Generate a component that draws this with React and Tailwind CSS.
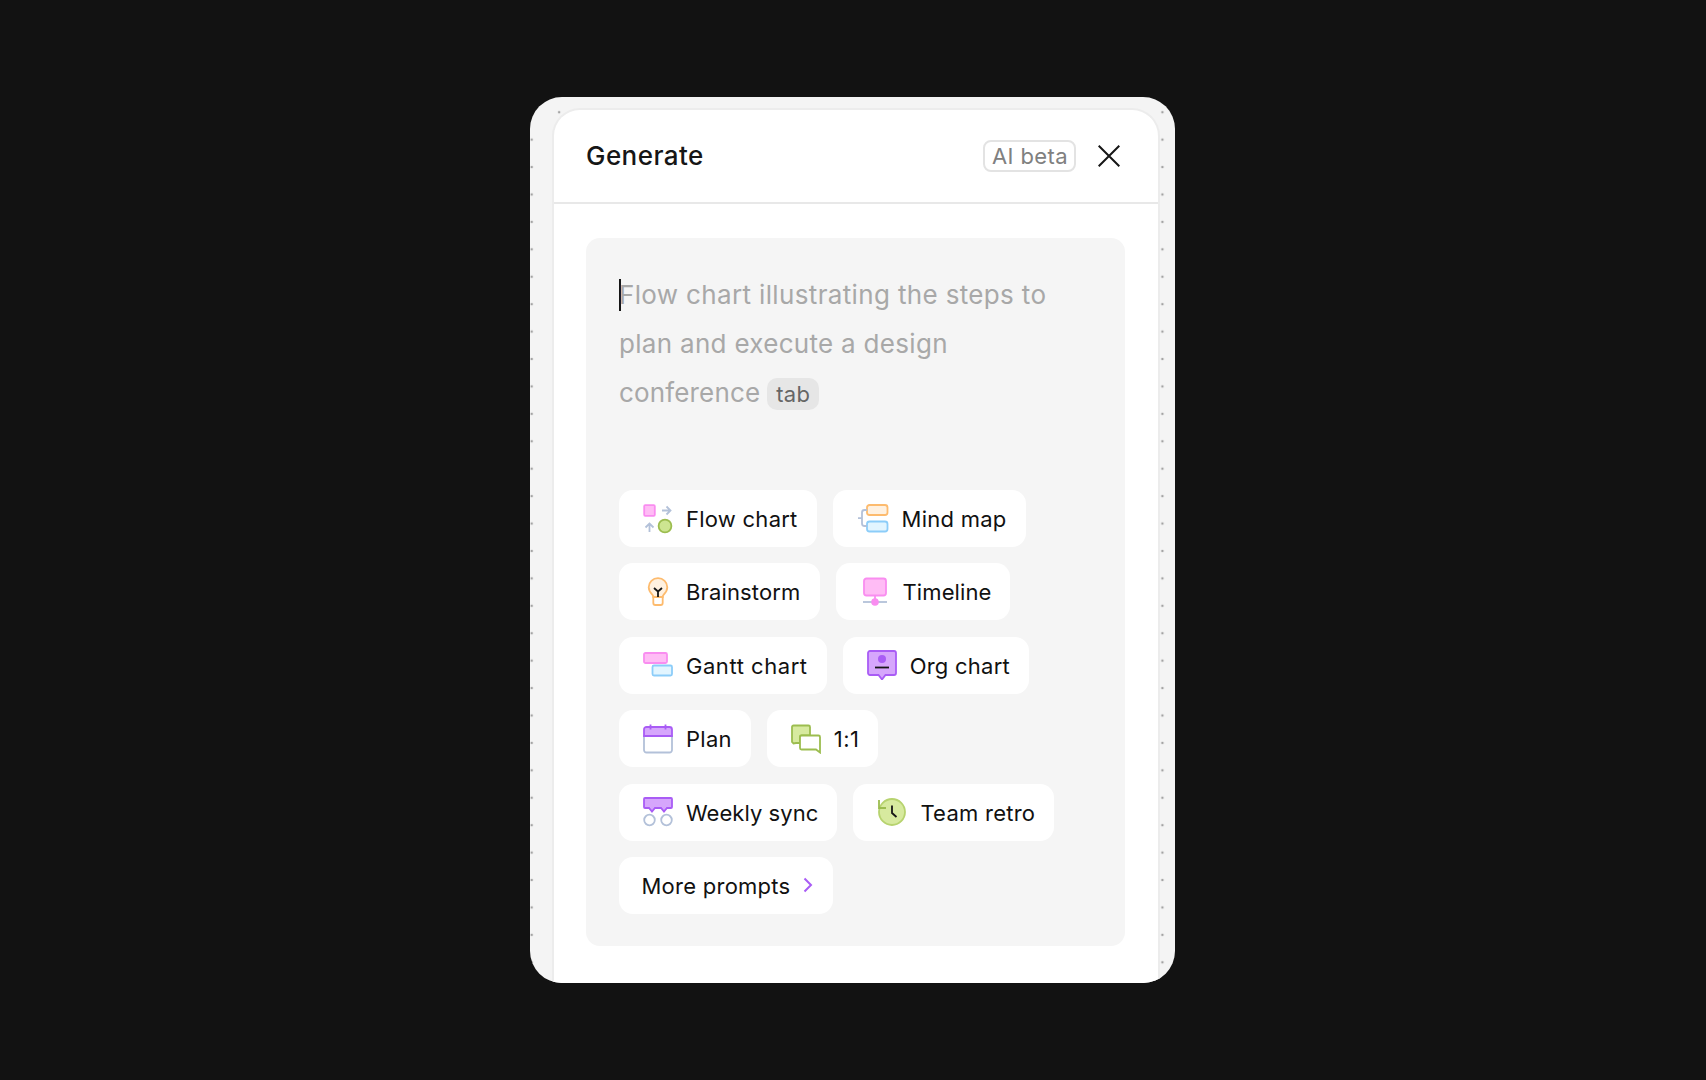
import React from 'react';

const FlowChartIcon = () => (
  <svg width="30" height="30" viewBox="0 0 30 30" fill="none">
    <rect x="1.200" y="1.200" width="10.600" height="10.600" rx="1" fill="#ffbcf5" stroke="#f98df0" strokeWidth="1.800" />
    <path d="M19 6.500h8.500M23.500 2.500l4 4-4 4" stroke="#b3c1d9" strokeWidth="1.800" />
    <path d="M6.500 28v-8.500M2.500 23.500l4-4 4 4" stroke="#b3c1d9" strokeWidth="1.800" />
    <circle cx="22" cy="22" r="6.400" fill="#cde591" stroke="#9cbd4f" strokeWidth="1.800" />
  </svg>
);

const MindMapIcon = () => (
  <svg width="32" height="30" viewBox="0 0 32 30" fill="none">
    <rect x="10" y="1" width="20.500" height="10" rx="2.500" fill="#fff1e0" stroke="#fdbb6e" strokeWidth="1.800" />
    <rect x="10" y="17.500" width="20.500" height="10" rx="2.500" fill="#e2f5ff" stroke="#8ccdf9" strokeWidth="1.800" />
    <path d="M1 14.200h4M10 6H7.500A2.500 2.500 0 0 0 5 8.500v11A2.500 2.500 0 0 0 7.500 22H10" stroke="#b3c1d9" strokeWidth="1.800" />
  </svg>
);

const BulbIcon = () => (
  <svg width="30" height="30" viewBox="0 0 30 30" fill="none">
    <path d="M15 1.200c5.200 0 9.300 4 9.300 9 0 3.500-2 5.700-3.600 7.500-.8.900-1 1.500-1 2.300H10.300c0-.8-.2-1.400-1-2.300C7.700 15.900 5.700 13.700 5.700 10.200c0-5 4.100-9 9.300-9Z" fill="#fff1e0" stroke="#fdbb6e" strokeWidth="1.800" />
    <path d="M10.300 20h9.400v6a2 2 0 0 1-2 2h-5.400a2 2 0 0 1-2-2v-6Z" fill="#fff" stroke="#fdbb6e" strokeWidth="1.800" />
    <path d="M11 11l4 3.500 4-3.500M15 14.500V20" stroke="#161616" strokeWidth="1.800" />
  </svg>
);

const TimelineIcon = () => (
  <svg width="26" height="30" viewBox="0 0 26 30" fill="none">
    <rect x="2" y="1.500" width="22" height="17" rx="2.500" fill="#ffbcf5" stroke="#f98df0" strokeWidth="1.800" />
    <path d="M1 25h24" stroke="#b3c1d9" strokeWidth="1.800" />
    <path d="M13 18v6" stroke="#f98df0" strokeWidth="1.800" />
    <circle cx="13" cy="25" r="3.800" fill="#f98df0" />
  </svg>
);

const GanttIcon = () => (
  <svg width="30" height="26" viewBox="0 0 30 26" fill="none">
    <rect x="1" y="1" width="23" height="10" rx="1.500" fill="#ffbcf5" stroke="#f98df0" strokeWidth="1.800" />
    <rect x="9.500" y="13.500" width="19.500" height="10" rx="1.500" fill="#e2f5ff" stroke="#8ccdf9" strokeWidth="1.800" />
  </svg>
);

const OrgChartIcon = () => (
  <svg width="30" height="30" viewBox="0 0 30 30" fill="none">
    <path d="M3 1h24a2 2 0 0 1 2 2v20a2 2 0 0 1-2 2h-8.500L15 29.500 11.500 25H3a2 2 0 0 1-2-2V3a2 2 0 0 1 2-2Z" fill="#d6a6fc" stroke="#a95cf5" strokeWidth="1.800" />
    <circle cx="15" cy="9" r="4" fill="#a95cf5" />
    <path d="M8 17.500h14" stroke="#161616" strokeWidth="1.800" />
  </svg>
);

const PlanIcon = () => (
  <svg width="30" height="30" viewBox="0 0 30 30" fill="none">
    <path d="M1 12h28v14a2.500 2.500 0 0 1-2.500 2.500h-23A2.500 2.500 0 0 1 1 26V12Z" fill="#fff" stroke="#b3c1d9" strokeWidth="1.800" />
    <path d="M3.500 3h23A2.500 2.500 0 0 1 29 5.500V12H1V5.500A2.500 2.500 0 0 1 3.500 3Z" fill="#d6a6fc" stroke="#a95cf5" strokeWidth="1.800" />
    <path d="M7.500.500v5M22.500.500v5" stroke="#a95cf5" strokeWidth="1.800" />
  </svg>
);

const ChatIcon = () => (
  <svg width="30" height="30" viewBox="0 0 30 30" fill="none">
    <path d="M2.500 1.500h15A1.500 1.500 0 0 1 19 3v8.500h-8.500A1.500 1.500 0 0 0 9 13v6H5l-2.500.500L1 18V3a1.500 1.500 0 0 1 1.500-1.500Z" fill="#d7ea9f" stroke="#9cbd4f" strokeWidth="1.800" />
    <path d="M10.500 11.500h17A1.500 1.500 0 0 1 29 13v15.500l-4-3H10.500A1.500 1.500 0 0 1 9 24V13a1.500 1.500 0 0 1 1.500-1.500Z" fill="#fff" stroke="#9cbd4f" strokeWidth="1.800" />
  </svg>
);

const WeeklySyncIcon = () => (
  <svg width="30" height="30" viewBox="0 0 30 30" fill="none">
    <path d="M2 1h26a1 1 0 0 1 1 1v8a1 1 0 0 1-1 1h-4l-3 3.500-3-3.500h-6l-3 3.500L6 11H2a1 1 0 0 1-1-1V2a1 1 0 0 1 1-1Z" fill="#d6a6fc" stroke="#a95cf5" strokeWidth="1.800" />
    <circle cx="6.500" cy="23" r="5.300" stroke="#b3c1d9" strokeWidth="1.800" />
    <circle cx="23.500" cy="23" r="5.300" stroke="#b3c1d9" strokeWidth="1.800" />
  </svg>
);

const RetroIcon = () => (
  <svg width="30" height="30" viewBox="0 0 30 30" fill="none">
    <circle cx="15" cy="15" r="13" fill="#d7ea9f" stroke="#b7d36f" strokeWidth="1.800" />
    <path d="M2 3v8h7" stroke="#9cbd4f" strokeWidth="1.800" />
    <path d="M15 8.500V16l4.500 4" stroke="#161616" strokeWidth="1.800" />
  </svg>
);

const prompts = [
  [
    { label: 'Flow chart', icon: <FlowChartIcon />, track: 'tracking-[0.25px]' },
    { label: 'Mind map', icon: <MindMapIcon />, wide: true, track: 'tracking-[0.25px]' },
  ],
  [
    { label: 'Brainstorm', icon: <BulbIcon />, track: 'tracking-[0.15px]' },
    { label: 'Timeline', icon: <TimelineIcon />, track: 'tracking-[0.1px]' },
  ],
  [
    { label: 'Gantt chart', icon: <GanttIcon />, track: 'tracking-[0.55px]' },
    { label: 'Org chart', icon: <OrgChartIcon />, track: 'tracking-[0.25px]' },
  ],
  [
    { label: 'Plan', icon: <PlanIcon />, track: 'tracking-[0.25px]' },
    { label: '1:1', icon: <ChatIcon />, track: 'tracking-[0.5px]' },
  ],
  [
    { label: 'Weekly sync', icon: <WeeklySyncIcon />, track: 'tracking-[0.05px]' },
    { label: 'Team retro', icon: <RetroIcon />, track: 'tracking-[0.25px]' },
  ],
];

const Pill = ({ icon, label, wide, track }) => (
  <div className={`h-[57px] flex items-center gap-[13px] pl-[24px] pr-[19px] bg-white rounded-[14px] text-[22px] text-[#111111] whitespace-nowrap ${track}`}>
    <span className={wide ? 'w-[32px] h-[30px] flex items-center justify-center' : 'w-[30px] h-[30px] flex items-center justify-center'}>{icon}</span>
    <span className="pt-[2px]">{label}</span>
  </div>
);

const App = () => {
  return (
    <div className="min-h-screen flex items-center justify-center bg-[#121212] font-['Inter',sans-serif]">
      <div className="w-[645px] h-[886px] mr-[1px] pt-[11px] pl-[22px] pr-[15px] rounded-[32px] overflow-hidden bg-[#f4f4f4] bg-[radial-gradient(circle,#a3a3a3_1.2px,transparent_1.6px)] bg-[size:27.43px_27.43px] bg-[position:-12px_1.5px]">
        <div className="h-full bg-white border-2 border-b-0 border-[#ececec] rounded-t-[28px]">
          <div className="h-[94px] pl-[32px] pr-[38px] flex items-center justify-between border-b-2 border-[#e8e8e8]">
            <h1 className="-mt-[2px] text-[26px] font-medium tracking-[0.45px] text-[#161616]">Generate</h1>
            <div className="flex items-center gap-[22px]">
              <span className="h-[32px] pl-[7px] pr-[6px] flex items-center border-2 border-[#e3e3e3] rounded-[8px] text-[22px] tracking-[0.4px] text-[#808080]">AI beta</span>
              <svg width="22" height="22" viewBox="0 0 22 22" fill="none" stroke="#161616" strokeWidth="2">
                <path d="M.7.700l20.600 20.600M21.300.700.7 21.300" />
              </svg>
            </div>
          </div>
          <div className="pt-[34px] pl-[32px] pr-[33px]">
            <div className="h-[708px] pt-[32px] pl-[33px] pr-[12px] bg-[#f5f5f5] rounded-[14px]">
              <div className="h-[220px]">
                <p className="text-[26px] leading-[49px] tracking-[0.3px] text-[#a8a8a8]">
                  <span className="inline-block w-[2px] h-[32px] -mr-[2px] align-[-7px] bg-[#161616]"></span>
                  <span className="tracking-[0.35px]">Flow chart illustrating the steps to</span>
                  <br />
                  plan and execute a design
                  <br />
                  <span className="tracking-[0.15px]">conference</span>
                  <span className="inline-flex h-[32px] pt-[2px] items-center ml-[7px] px-[9px] rounded-[10px] bg-[#e6e6e6] text-[22px] tracking-[0.25px] text-[#666666]">tab</span>
                </p>
              </div>
              <div className="flex flex-col gap-[16.4px]">
                {prompts.map((row, i) => (
                  <div key={i} className="flex gap-[16px]">
                    {row.map((p) => (
                      <Pill key={p.label} icon={p.icon} label={p.label} wide={p.wide} track={p.track} />
                    ))}
                  </div>
                ))}
                <div className="self-start h-[57px] flex items-center gap-[13px] pl-[22.5px] pr-[19.5px] bg-white rounded-[14px] text-[22px] tracking-[0.25px] text-[#111111] whitespace-nowrap">
                  <span className="pt-[2px]">More prompts</span>
                  <svg width="10" height="16" viewBox="0 0 10 16" fill="none" stroke="#a95cf5" strokeWidth="2">
                    <path d="M1.500 1.500 8 8l-6.500 6.500" />
                  </svg>
                </div>
              </div>
            </div>
          </div>
        </div>
      </div>
    </div>
  );
};

export default App;
